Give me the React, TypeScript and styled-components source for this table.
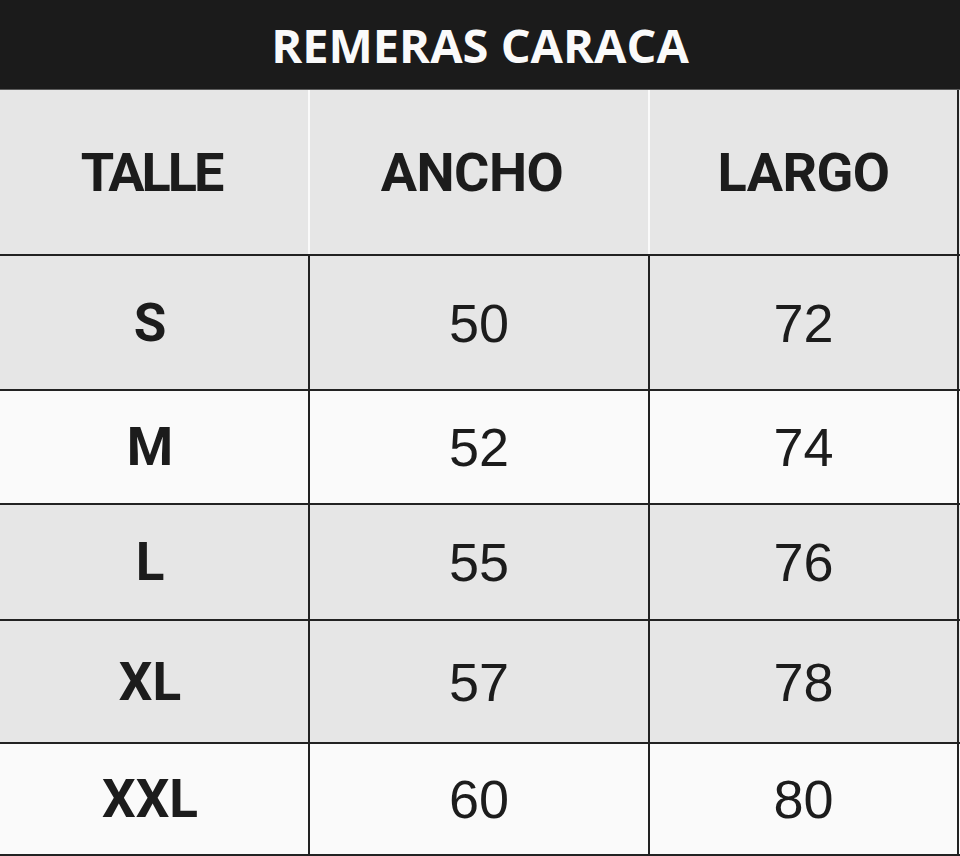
import styled, { createGlobalStyle } from 'styled-components'

const GlobalStyle = createGlobalStyle`
  html, body {
    margin: 0;
    padding: 0;
    background: #fafafa;
  }
`

const Sheet = styled.div`
  width: 960px;
  height: 856px;
  overflow: hidden;
  background: #fafafa;
  display: flex;
  flex-direction: column;
`

const TitleBar = styled.header`
  height: 89px;
  flex: none;
  background: #1b1b1b;
  border-bottom: 1px solid #5c5c5c;
  display: flex;
  align-items: center;
  justify-content: center;
  font-family: 'Open Sans', 'Liberation Sans', sans-serif;
  font-weight: 700;
  font-size: 47px;
  color: #fafafa;
`

const Grid = styled.div<{ $height: number; $shade: 'gray' | 'white' }>`
  display: grid;
  grid-template-columns: 310px 340px 309px;
  height: ${({ $height }) => $height}px;
  flex: none;
  background: ${({ $shade }) => ($shade === 'gray' ? '#e6e6e6' : '#fafafa')};
  border-bottom: 2px solid #222;
`

const HeadCell = styled.div<{ $last?: boolean; $inset?: number; $tracking?: number }>`
  display: flex;
  align-items: center;
  justify-content: center;
  padding-right: ${({ $inset = 0 }) => $inset}px;
  border-right: 2px solid ${({ $last }) => ($last ? '#222' : '#fafafa')};
  font-family: Roboto, 'Liberation Sans', sans-serif;
  font-weight: 700;
  font-size: 54px;
  letter-spacing: ${({ $tracking = -0.5 }) => $tracking}px;
  color: #1c1c1c;
`

const SizeCell = styled.div`
  display: flex;
  align-items: center;
  justify-content: center;
  padding-right: 8px;
  border-right: 2px solid #222;
  font-family: Roboto, 'Liberation Sans', sans-serif;
  font-weight: 700;
  font-size: 53px;
  color: #1c1c1c;
`

const ValueCell = styled.div`
  display: flex;
  align-items: center;
  justify-content: center;
  border-right: 2px solid #222;
  font-family: 'Liberation Sans', Arial, sans-serif;
  font-weight: 400;
  font-size: 54px;
  color: #1c1c1c;
`

const rows = [
  { size: 'S', ancho: 50, largo: 72, height: 133, shade: 'gray' as const },
  { size: 'M', ancho: 52, largo: 74, height: 112, shade: 'white' as const },
  { size: 'L', ancho: 55, largo: 76, height: 114, shade: 'gray' as const },
  { size: 'XL', ancho: 57, largo: 78, height: 121, shade: 'gray' as const },
  { size: 'XXL', ancho: 60, largo: 80, height: 110, shade: 'white' as const },
]

export default function App() {
  return (
    <>
      <GlobalStyle />
      <Sheet>
        <TitleBar>REMERAS CARACA</TitleBar>
        <Grid $height={164} $shade="gray">
          <HeadCell $inset={6} $tracking={-3}>TALLE</HeadCell>
          <HeadCell $inset={14}>ANCHO</HeadCell>
          <HeadCell $last>LARGO</HeadCell>
        </Grid>
        {rows.map((row) => (
          <Grid key={row.size} $height={row.height} $shade={row.shade}>
            <SizeCell>{row.size}</SizeCell>
            <ValueCell>{row.ancho}</ValueCell>
            <ValueCell>{row.largo}</ValueCell>
          </Grid>
        ))}
      </Sheet>
    </>
  )
}
